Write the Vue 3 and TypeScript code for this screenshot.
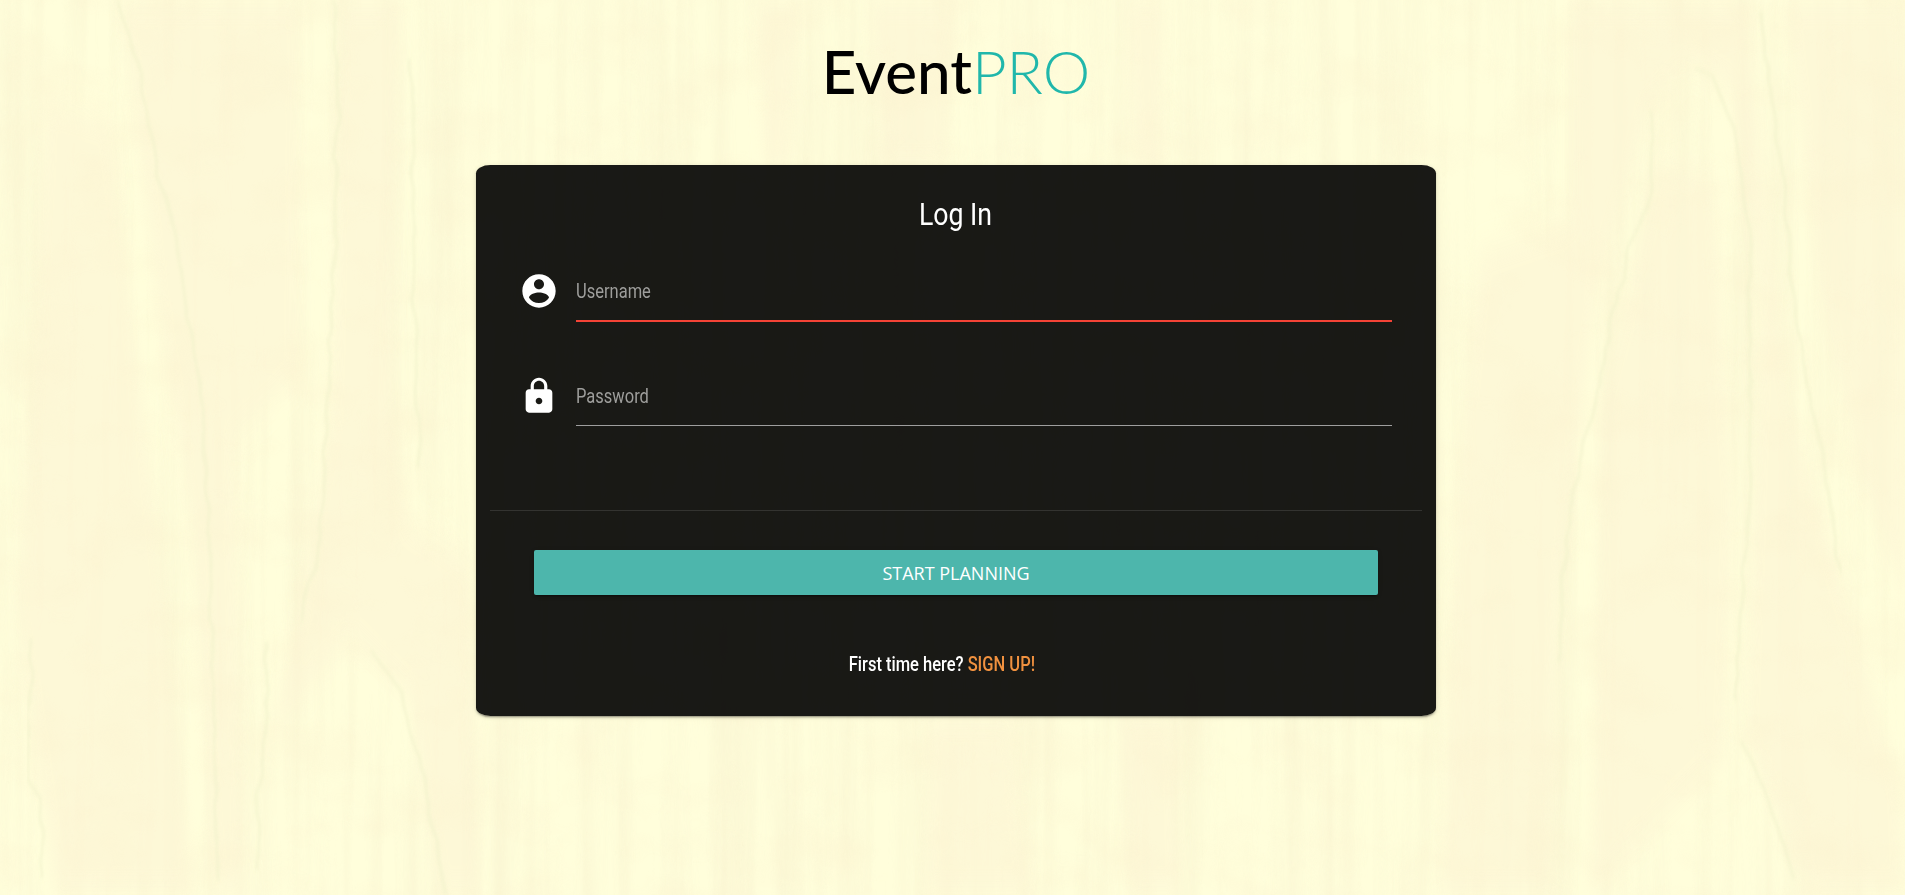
<script setup lang="ts">
import { ref } from 'vue'

const username = ref('')
const password = ref('')

// Broad tonal areas of the wood board
const bands: string[] = [
  'M120 0H300L298 380L235 440L245 895H215L190 520L160 330Z',
  'M45 100L110 120L150 450L195 895H55L15 600L35 350Z',
  'M340 0H400L392 400L410 520L470 560L480 895H440L410 700L350 640L285 720L270 740L300 600L330 420Z',
  'M1570 0H1745L1790 400L1900 780L1905 895H1810L1745 740L1760 300L1730 90L1690 65L1650 110L1600 280L1560 600L1550 895H1440L1455 500L1480 250L1570 220Z',
  'M1785 0H1905V600L1860 480L1820 300Z',
  'M1660 160L1715 180L1735 500L1725 760L1590 895L1600 400Z',
  'M755 0H800L790 170H765Z',
  'M870 0H955L945 170H885Z',
  'M1125 0H1165L1160 170H1135Z',
  'M930 716H1010L1030 895H925Z',
  'M1120 716H1175L1180 895H1130Z',
]

// Thin growth lines
const lines: string[] = [
  'M117 0L137 60L147 110L158 180L167 200L183 270L192 340L203 410L210 560L218 880',
  'M333 0L338 80L334 250L328 400L320 540L300 620',
  'M410 60L413 200L415 330L420 470',
  'M265 640L267 720L258 800L257 870',
  'M32 640L27 780L42 800L43 880',
  'M370 650L400 690L425 780L445 895',
  'M1650 110L1650 190L1630 250L1595 400L1570 510L1557 660',
  'M1695 68L1712 75L1735 130L1750 230L1750 500L1735 700',
  'M1740 740L1765 790L1795 880',
  'M1760 10L1767 60L1782 180L1798 330L1825 470L1842 580',
]
</script>

<template>
  <div class="page">
    <svg class="wood" viewBox="0 0 1905 895" aria-hidden="true">
      <filter id="grain" x="0" y="0" width="100%" height="100%" color-interpolation-filters="sRGB">
        <feTurbulence type="fractalNoise" baseFrequency="0.045 0.002" numOctaves="4" seed="8" />
        <feColorMatrix values="0 0 0 0 0.975  0 0 0 0 0.955  0 0 0 0 0.82  2 0 0 0 -0.75" />
      </filter>
      <filter id="mottle" x="0" y="0" width="100%" height="100%" color-interpolation-filters="sRGB">
        <feTurbulence type="fractalNoise" baseFrequency="0.014 0.018" numOctaves="3" seed="3" />
        <feColorMatrix values="0 0 0 0 0.985  0 0 0 0 0.945  0 0 0 0 0.81  2 0 0 0 -0.9" />
      </filter>
      <filter id="soft" x="-5%" y="-5%" width="110%" height="110%">
        <feGaussianBlur stdDeviation="6 12" />
      </filter>
      <filter id="wobble" x="0" y="0" width="100%" height="100%">
        <feTurbulence type="fractalNoise" baseFrequency="0.03" numOctaves="2" seed="5" />
        <feDisplacementMap in="SourceGraphic" scale="10" />
        <feGaussianBlur stdDeviation="1.2 2" />
      </filter>
      <rect width="1905" height="895" filter="url(#grain)" opacity="0.65" />
      <g class="bands" filter="url(#soft)">
        <path v-for="d in bands" :key="d" :d="d" />
      </g>
      <rect width="1905" height="895" filter="url(#mottle)" opacity="0.4" />
      <g class="lines" filter="url(#wobble)">
        <path v-for="d in lines" :key="d" :d="d" />
      </g>
    </svg>
    <header class="logo"><span class="event">Event</span><span class="pro">PRO</span></header>
    <form class="card" @submit.prevent>
      <h1 class="title"><span class="narrow">Log In</span></h1>
      <label class="field">
        <svg class="icon" viewBox="0 0 24 24"><path d="M12 2C6.48 2 2 6.48 2 12s4.48 10 10 10 10-4.48 10-10S17.52 2 12 2zm0 3c1.66 0 3 1.34 3 3s-1.34 3-3 3-3-1.34-3-3 1.34-3 3-3zm0 14.2c-2.5 0-4.71-1.28-6-3.22.03-1.99 4-3.08 6-3.08 1.99 0 5.97 1.09 6 3.08-1.29 1.94-3.5 3.22-6 3.22z" /></svg>
        <span class="control invalid"><input v-model="username" type="text" placeholder="Username" /></span>
      </label>
      <label class="field">
        <svg class="icon" viewBox="0 0 24 24"><path d="M18 8h-1V6c0-2.76-2.24-5-5-5S7 3.24 7 6v2H6c-1.1 0-2 .9-2 2v10c0 1.1.9 2 2 2h12c1.1 0 2-.9 2-2V10c0-1.1-.9-2-2-2zm-6 9c-1.1 0-2-.9-2-2s.9-2 2-2 2 .9 2 2-.9 2-2 2zm3.1-9H8.9V6c0-1.71 1.39-3.1 3.1-3.1 1.71 0 3.1 1.39 3.1 3.1v2z" /></svg>
        <span class="control"><input v-model="password" type="password" placeholder="Password" /></span>
      </label>
      <hr class="rule" />
      <button class="submit" type="submit">START PLANNING</button>
      <p class="signup"><span class="narrow">First time here? <a>SIGN UP!</a></span></p>
    </form>
  </div>
</template>

<style>
body {
  margin: 0;
}
</style>

<style scoped>
.page {
  position: relative;
  display: flex;
  flex-direction: column;
  align-items: center;
  box-sizing: border-box;
  height: 895px;
  padding-left: 7px;
  overflow: hidden;
  background: #fffedb;
  font-family: Roboto, 'Liberation Sans', sans-serif;
}
.wood {
  position: absolute;
  inset: 0;
  width: 1905px;
  height: 895px;
}
.bands {
  fill: #fdf6d6;
  opacity: 0.65;
}
.lines {
  fill: none;
  stroke: #f1f2cc;
  stroke-width: 3.5;
  opacity: 0.5;
}
.logo {
  position: relative;
  height: 165px;
  padding-top: 35px;
  box-sizing: border-box;
  font: 400 60px/72px Lato, sans-serif;
  white-space: nowrap;
}
.event {
  color: #000;
  font-weight: 500;
}
.pro {
  color: #20b7ab;
  font-weight: 300;
}
.card {
  position: relative;
  box-sizing: border-box;
  width: 960px;
  height: 551px;
  padding: 0 14px;
  border-radius: 1.5%;
  background: rgba(0, 0, 0, 0.9);
  box-shadow: 0 2px 2px 0 rgba(0, 0, 0, 0.14), 0 1px 5px 0 rgba(0, 0, 0, 0.12), 0 3px 1px -2px rgba(0, 0, 0, 0.2);
  color: #fff;
}
.narrow {
  display: inline-block;
  transform: scaleX(0.86);
}
.title {
  margin: 0;
  padding-top: 32px;
  height: 74px;
  font-size: 31px;
  line-height: 36px;
  font-weight: 400;
  text-align: center;
}
.field {
  display: flex;
  height: 105px;
  padding-left: 29px;
}
.icon {
  width: 40px;
  height: 40px;
  fill: #fff;
}
.control {
  width: 816px;
  height: 54px;
  margin-top: -5px;
  margin-left: 17px;
  border-bottom: 1px solid #9e9e9e;
}
.invalid {
  border-bottom-color: #f44336;
  box-shadow: 0 1px 0 #f44336;
}
.control input {
  width: 100%;
  height: 50px;
  padding: 0;
  border: 0;
  outline: 0;
  background: transparent;
  color: #fff;
  font: 400 20px Roboto, sans-serif;
  transform: scaleX(0.825);
  transform-origin: left;
}
.control input::placeholder {
  color: #9e9e9c;
}
.rule {
  height: 1px;
  margin: 29px 0 0;
  border: 0;
  background: #333330;
}
.submit {
  display: block;
  width: 844px;
  height: 45px;
  margin: 39px 0 0 44px;
  padding: 0;
  border: 0;
  border-radius: 2px;
  background: #4db6ac;
  box-shadow: 0 2px 2px 0 rgba(0, 0, 0, 0.14), 0 1px 5px 0 rgba(0, 0, 0, 0.12), 0 3px 1px -2px rgba(0, 0, 0, 0.2);
  color: #fff;
  font: 400 18px 'Open Sans', sans-serif;
}
.signup {
  margin: 58px 29px 0 0;
  font-size: 20px;
  font-weight: 500;
  line-height: 23px;
  text-align: center;
}
.signup .narrow {
  transform: scaleX(0.825);
}
.signup a {
  color: #f0913f;
}
</style>
